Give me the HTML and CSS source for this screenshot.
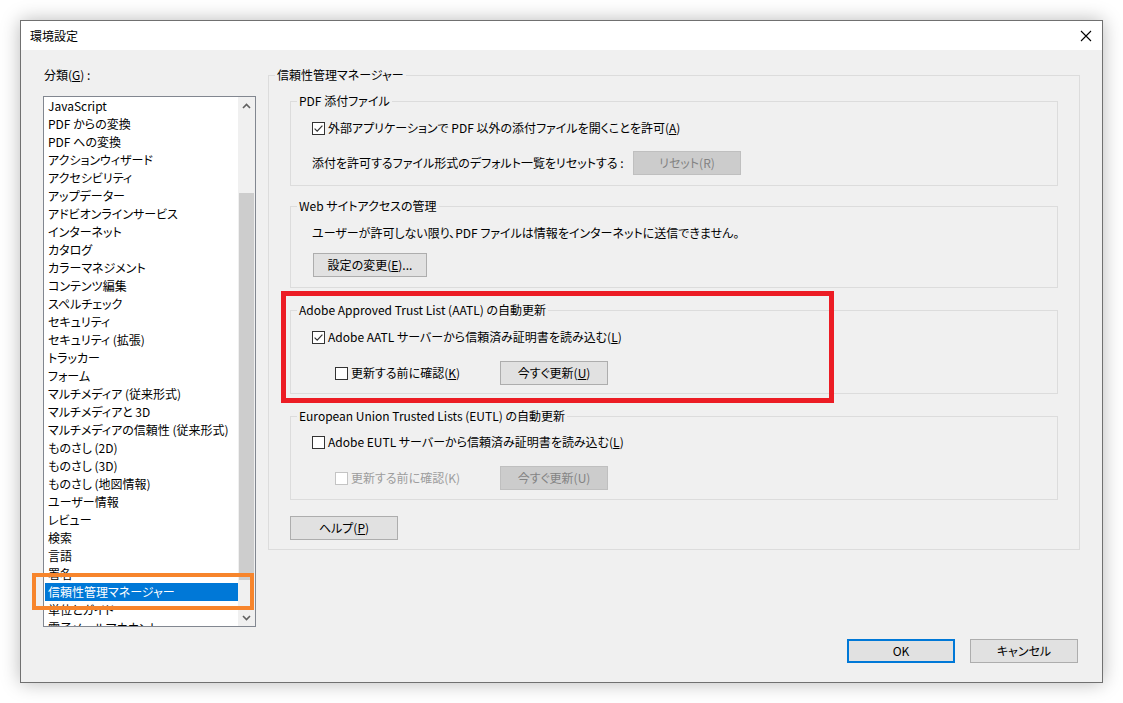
FILE: index.html
```html
<!DOCTYPE html>
<html lang="ja">
<head>
<meta charset="utf-8">
<title>環境設定</title>
<link rel="stylesheet" href="styles.css">
</head>
<body>
<div class="window">
  <div class="titlebar">
    <span class="title">環境設定</span>
    <svg class="close" width="12" height="12" viewBox="0 0 12 12"><path d="M1 1 L11 11 M11 1 L1 11" stroke="#000" stroke-width="1.1" fill="none"/></svg>
  </div>
  <div class="dlg">
    <div class="main">
      <div class="left">
        <div class="label">分類(<u>G</u>) :</div>
        <div class="listbox">
          <ul class="items">
            <li>JavaScript</li>
            <li>PDF からの変換</li>
            <li>PDF への変換</li>
            <li>アクションウィザード</li>
            <li>アクセシビリティ</li>
            <li>アップデーター</li>
            <li>アドビオンラインサービス</li>
            <li>インターネット</li>
            <li>カタログ</li>
            <li>カラーマネジメント</li>
            <li>コンテンツ編集</li>
            <li>スペルチェック</li>
            <li>セキュリティ</li>
            <li>セキュリティ (拡張)</li>
            <li>トラッカー</li>
            <li>フォーム</li>
            <li>マルチメディア (従来形式)</li>
            <li>マルチメディアと 3D</li>
            <li>マルチメディアの信頼性 (従来形式)</li>
            <li>ものさし (2D)</li>
            <li>ものさし (3D)</li>
            <li>ものさし (地図情報)</li>
            <li>ユーザー情報</li>
            <li>レビュー</li>
            <li>検索</li>
            <li>言語</li>
            <li>署名</li>
            <li class="sel">信頼性管理マネージャー</li>
            <li>単位とガイド</li>
            <li>電子メールアカウント</li>
          </ul>
          <div class="scrollbar">
            <div class="sb-btn"><svg width="9" height="6" viewBox="0 0 9 6"><path d="M1 5 L4.5 1.5 L8 5" stroke="#606060" stroke-width="1.6" fill="none"/></svg></div>
            <div class="sb-track"><div class="sb-thumb"></div></div>
            <div class="sb-btn"><svg width="9" height="6" viewBox="0 0 9 6"><path d="M1 1 L4.5 4.5 L8 1" stroke="#606060" stroke-width="1.6" fill="none"/></svg></div>
          </div>
          <div class="mark-orange"></div>
        </div>
      </div>
      <div class="right">
        <fieldset class="outer">
          <legend>信頼性管理マネージャー</legend>
          <div class="outer-body">
            <fieldset class="group g-pdf">
              <legend>PDF 添付ファイル</legend>
              <div class="gbody">
                <div class="row">
                  <span class="cb on"><svg width="13" height="13" viewBox="0 0 13 13"><rect x="0.5" y="0.5" width="12" height="12" fill="#fff" stroke="#333"/><path d="M2.6 6.6 L5.2 9.2 L10.4 3.6" stroke="#333" stroke-width="1.2" fill="none"/></svg></span>
                  <span>外部アプリケーションで PDF 以外の添付ファイルを開くことを許可(<u>A</u>)</span>
                </div>
                <div class="row row2">
                  <span class="reset-label">添付を許可するファイル形式のデフォルト一覧をリセットする :</span>
                  <button class="btn disabled">リセット(R)</button>
                </div>
              </div>
            </fieldset>
            <fieldset class="group g-web">
              <legend>Web サイトアクセスの管理</legend>
              <div class="gbody">
                <div class="row">ユーザーが許可しない限り、PDF ファイルは情報をインターネットに送信できません。</div>
                <div class="row row2"><button class="btn wide">設定の変更(<u>E</u>)...</button></div>
              </div>
            </fieldset>
            <div class="hl">
              <fieldset class="group g-aatl">
                <legend>Adobe Approved Trust List (AATL) の自動更新</legend>
                <div class="gbody">
                  <div class="row">
                    <span class="cb on"><svg width="13" height="13" viewBox="0 0 13 13"><rect x="0.5" y="0.5" width="12" height="12" fill="#fff" stroke="#333"/><path d="M2.6 6.6 L5.2 9.2 L10.4 3.6" stroke="#333" stroke-width="1.2" fill="none"/></svg></span>
                    <span>Adobe AATL サーバーから信頼済み証明書を読み込む(<u>L</u>)</span>
                  </div>
                  <div class="row row2">
                    <span class="sub">
                      <span class="cb"><svg width="13" height="13" viewBox="0 0 13 13"><rect x="0.5" y="0.5" width="12" height="12" fill="#fff" stroke="#333"/></svg></span>
                      <span>更新する前に確認(<u>K</u>)</span>
                    </span>
                    <button class="btn">今すぐ更新(<u>U</u>)</button>
                  </div>
                </div>
              </fieldset>
              <div class="mark-red"></div>
            </div>
            <fieldset class="group g-eutl">
              <legend>European Union Trusted Lists (EUTL) の自動更新</legend>
              <div class="gbody">
                <div class="row">
                  <span class="cb"><svg width="13" height="13" viewBox="0 0 13 13"><rect x="0.5" y="0.5" width="12" height="12" fill="#fff" stroke="#333"/></svg></span>
                  <span>Adobe EUTL サーバーから信頼済み証明書を読み込む(<u>L</u>)</span>
                </div>
                <div class="row row2">
                  <span class="sub dim">
                    <span class="cb"><svg width="13" height="13" viewBox="0 0 13 13"><rect x="0.5" y="0.5" width="12" height="12" fill="#fff" stroke="#c4c4c4"/></svg></span>
                    <span>更新する前に確認(K)</span>
                  </span>
                  <button class="btn disabled">今すぐ更新(U)</button>
                </div>
              </div>
            </fieldset>
            <button class="btn help">ヘルプ(<u>P</u>)</button>
          </div>
        </fieldset>
      </div>
    </div>
    <div class="footer">
      <button class="btn ok">OK</button>
      <button class="btn">キャンセル</button>
    </div>
  </div>
</div>
</body>
</html>
```

FILE: styles.css
```css
* { box-sizing: border-box; }
html, body { margin: 0; padding: 0; }
body {
  background: #ffffff;
  font-family: "Noto Sans CJK JP", "Noto Sans", sans-serif;
  font-size: 12px;
  line-height: 16px;
  color: #000;
  font-feature-settings: "palt";
  padding: 20px;
}
u { text-decoration: underline; text-underline-offset: 1px; }

.window {
  width: 1083px;
  height: 663px;
  border: 1px solid #707070;
  background: #f0f0f0;
  box-shadow: 0 0 18px rgba(0,0,0,0.28);
  display: flex;
  flex-direction: column;
}
.titlebar {
  height: 29px;
  background: #fff;
  display: flex;
  align-items: center;
  justify-content: space-between;
  padding: 0 10px 0 9px;
}
.title { font-size: 12px; }
.close { display: block; }

.dlg {
  flex: 1;
  display: flex;
  flex-direction: column;
  padding: 17px 22px 0 22px;
}
.main { display: flex; gap: 12px; height: 560px; }

.left { width: 213px; display: flex; flex-direction: column; }
.label { height: 16px; padding-left: 1px; }
.listbox {
  margin-top: 13px;
  height: 531px;
  border: 1px solid #828790;
  background: #fff;
  display: flex;
  position: relative;
}
.items {
  list-style: none;
  margin: 0;
  padding: 0 0 0 1px;
  flex: 1;
  overflow: hidden;
}
.items li {
  height: 18px;
  line-height: 17px;
  padding-left: 3px;
  white-space: nowrap;
}
.items li.sel { background: #0078d7; color: #fff; }
.scrollbar {
  width: 17px;
  background: #f0f0f0;
  display: flex;
  flex-direction: column;
}
.sb-btn { height: 17px; display: flex; align-items: center; justify-content: center; }
.sb-track { flex: 1; padding: 79px 1px 0 1px; }
.sb-thumb { height: 387px; background: #cdcdcd; }
.mark-orange {
  position: absolute;
  left: -12px;
  top: 476px;
  width: 222px;
  height: 37px;
  border: 4px solid #f7852c;
}

.right { width: 812px; }
fieldset {
  margin: 0;
  padding: 0;
  border: 1px solid #dcdcdc;
  min-width: 0;
}
legend {
  padding: 0 2px;
  margin-left: 6px;
  line-height: 16px;
  height: 16px;
}
.outer { height: 483px; }
.outer-body { padding: 10px 21px 9px 21px; display: flex; flex-direction: column; }
.gbody { padding: 10px 0 10px 21px; }
.row { display: flex; align-items: center; height: 18px; white-space: nowrap; }
.row2 { height: 24px; margin-top: 14px; }
.g-web .row2 { margin-top: 11px; }
.g-web { margin-top: 12px; }
.hl { position: relative; margin-top: 14px; }
.g-aatl .gbody { padding-top: 10px; padding-bottom: 8px; }
.g-aatl .row2 { margin-top: 15px; }
.g-eutl { margin-top: 14px; }
.g-eutl .gbody { padding-top: 9px; padding-bottom: 9px; }
.g-eutl .row2 { margin-top: 15px; }

.cb { width: 13px; height: 13px; margin-right: 3px; display: inline-flex; }
.cb svg { display: block; }
.reset-label { width: 321px; }
.sub { display: flex; align-items: center; width: 165px; margin-left: 23px; }
.dim { color: #9d9d9d; }

.btn {
  font: inherit;
  font-feature-settings: "palt";
  width: 108px;
  height: 24px;
  border: 1px solid #adadad;
  background: #e1e1e1;
  color: #000;
  padding: 0;
  margin: 0;
  line-height: 20px;
}
.btn.disabled { background: #cccccc; border-color: #bfbfbf; color: #838383; }
.btn.wide { width: 114px; margin-left: 1px; }
.btn.help { margin-top: 16px; align-self: flex-start; }

.mark-red {
  position: absolute;
  left: -9px;
  top: -11px;
  width: 553px;
  height: 112px;
  border: 5px solid #ec1c24;
}

.footer {
  margin-top: 12px;
  display: flex;
  justify-content: flex-end;
  gap: 15px;
  padding-right: 2px;
}
.btn.ok { border: 2px solid #0078d7; }
```
